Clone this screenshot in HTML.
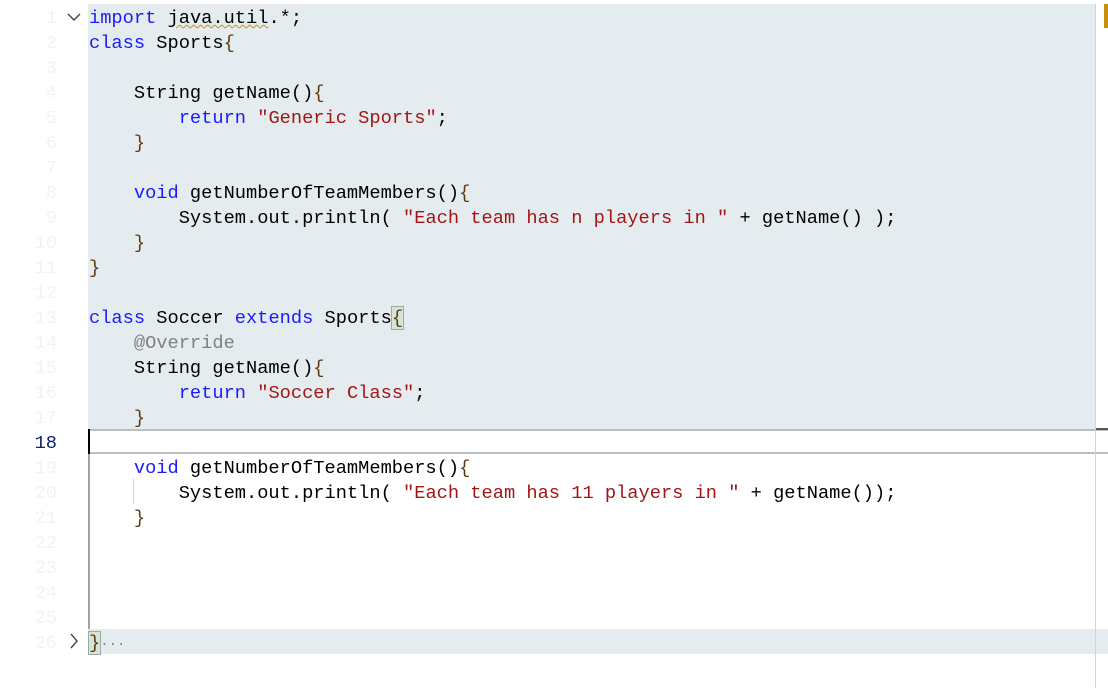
<!DOCTYPE html>
<html><head><meta charset="utf-8"><style>
html,body{margin:0;padding:0;background:#fff;width:1108px;height:688px;overflow:hidden;}
.w{position:relative;width:1108px;height:688px;font-family:"Liberation Mono","DejaVu Sans Mono",monospace;font-size:18.7px;}
.hl{position:absolute;left:88px;top:4px;width:1007px;height:425px;background:#e5ecef;}
.hl2{position:absolute;left:88px;top:629px;width:1020px;height:25px;background:#e5ecef;}
.cur{position:absolute;left:88px;top:429px;width:1020px;height:25px;border-top:2px solid #b9bfc4;border-bottom:2px solid #b9bfc4;box-sizing:border-box;background:#fff;}
.caret{position:absolute;left:88px;top:429px;width:2px;height:25px;background:#000;}
.vl{position:absolute;left:88px;top:454px;width:2px;height:175px;background:#a0a4a8;}
.sb{position:absolute;left:1095px;top:4px;width:1px;height:684px;background:#cfd4d8;}
.mk{position:absolute;left:1104px;top:4px;width:4px;height:24px;background:#c8900a;}
.sbm{position:absolute;left:1096px;top:428px;width:12px;height:2px;background:#555;}
.ln{position:absolute;left:0;width:57px;text-align:right;color:#f0f3f9;height:25px;line-height:25px;padding-top:2px;}
.ln.a{color:#0b216f;}
.c{position:absolute;left:89px;height:25px;line-height:25px;padding-top:2px;white-space:pre;color:#000;}
.k{color:#1a1aff}.s{color:#a31515}.b{color:#5c3a10}.g{color:#808080}
.ig{position:absolute;left:133px;top:479px;width:1px;height:25px;background:#d0d0d0;}
.br{outline:1px solid #9aa;background:#d6e4d6;}
</style></head><body><div class="w">
<div class="hl"></div><div class="hl2"></div><div class="cur"></div><div class="caret"></div><div class="vl"></div>
<div class="sb"></div><div class="mk"></div><div class="sbm"></div>
<div class="ig"></div>
<svg style="position:absolute;left:66px;top:11px" width="16" height="12"><path d="M2 3 L8 9 L14 3" fill="none" stroke="#444" stroke-width="1.4"/></svg>
<svg style="position:absolute;left:68px;top:632px" width="12" height="18"><path d="M3 2 L9 9 L3 16" fill="none" stroke="#444" stroke-width="1.4"/></svg>

<div class="ln" style="top:4px">1</div><div class="ln" style="top:29px">2</div><div class="ln" style="top:54px">3</div><div class="ln" style="top:79px">4</div><div class="ln" style="top:104px">5</div><div class="ln" style="top:129px">6</div><div class="ln" style="top:154px">7</div><div class="ln" style="top:179px">8</div><div class="ln" style="top:204px">9</div><div class="ln" style="top:229px">10</div><div class="ln" style="top:254px">11</div><div class="ln" style="top:279px">12</div><div class="ln" style="top:304px">13</div><div class="ln" style="top:329px">14</div><div class="ln" style="top:354px">15</div><div class="ln" style="top:379px">16</div><div class="ln" style="top:404px">17</div><div class="ln a" style="top:429px">18</div><div class="ln" style="top:454px">19</div><div class="ln" style="top:479px">20</div><div class="ln" style="top:504px">21</div><div class="ln" style="top:529px">22</div><div class="ln" style="top:554px">23</div><div class="ln" style="top:579px">24</div><div class="ln" style="top:604px">25</div><div class="ln" style="top:629px">26</div>

<div class="c" style="top:4px"><span class="k">import</span> <span style="text-decoration:underline wavy #c8900a;text-decoration-thickness:1px">java.util</span>.*;</div>
<div class="c" style="top:29px"><span class="k">class</span> Sports<span class="b">{</span></div>
<div class="c" style="top:79px">    String getName()<span class="b">{</span></div>
<div class="c" style="top:104px">        <span class="k">return</span> <span class="s">"Generic Sports"</span>;</div>
<div class="c" style="top:129px">    <span class="b">}</span></div>
<div class="c" style="top:179px">    <span class="k">void</span> getNumberOfTeamMembers()<span class="b">{</span></div>
<div class="c" style="top:204px">        System.out.println( <span class="s">"Each team has n players in "</span> + getName() );</div>
<div class="c" style="top:229px">    <span class="b">}</span></div>
<div class="c" style="top:254px"><span class="b">}</span></div>
<div class="c" style="top:304px"><span class="k">class</span> Soccer <span class="k">extends</span> Sports<span class="b br">{</span></div>
<div class="c" style="top:329px">    <span class="g">@Override</span></div>
<div class="c" style="top:354px">    String getName()<span class="b">{</span></div>
<div class="c" style="top:379px">        <span class="k">return</span> <span class="s">"Soccer Class"</span>;</div>
<div class="c" style="top:404px">    <span class="b">}</span></div>
<div class="c" style="top:454px">    <span class="k">void</span> getNumberOfTeamMembers()<span class="b">{</span></div>
<div class="c" style="top:479px">        System.out.println( <span class="s">"Each team has 11 players in "</span> + getName());</div>
<div class="c" style="top:504px">    <span class="b">}</span></div>
<div class="c" style="top:629px"><span class="b br">}</span><span class="g" style="font-size:14px">···</span></div>
</div></body></html>
